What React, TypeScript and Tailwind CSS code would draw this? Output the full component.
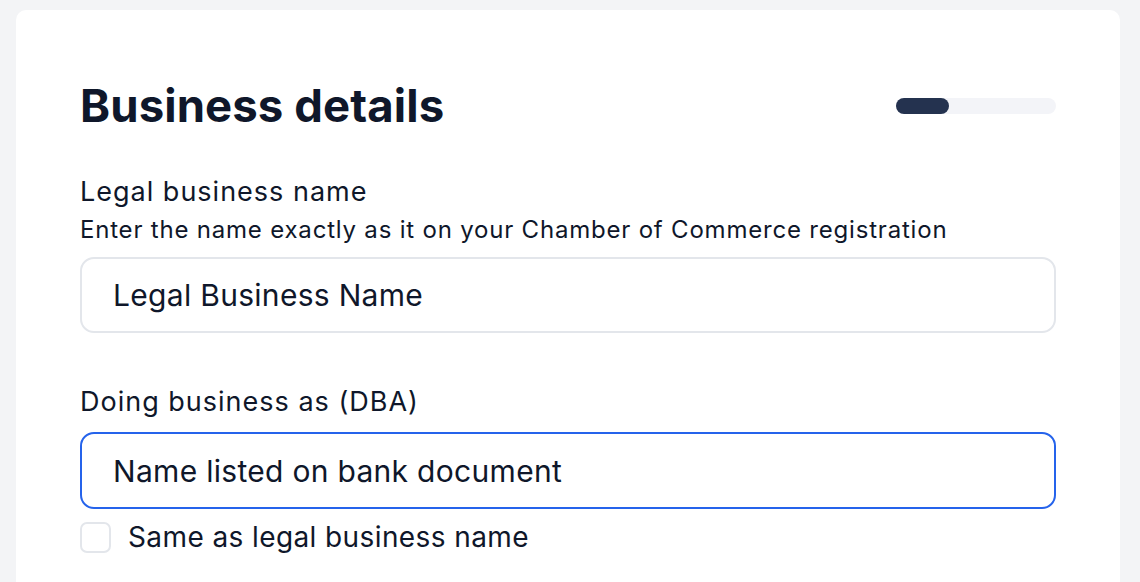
import { useState } from "react";

export default function App() {
  const [same, setSame] = useState(false);

  return (
    <div className="min-h-screen bg-[#f3f4f6] pl-4 pr-5 pt-[10px] font-['Inter',sans-serif] text-[#0f172a]">
      <div className="rounded-[10px] bg-white px-16 pt-[66px] pb-10">
        <div className="flex items-center justify-between">
          <h1 className="text-[45.5px] font-bold leading-[60px] tracking-[0.1px]">Business details</h1>
          <div className="h-4 w-40 rounded-full bg-[#f3f4f8]">
            <div className="h-4 w-[53px] rounded-full bg-[#24324f]" />
          </div>
        </div>

        <div className="mt-[38px]">
          <label className="block text-[27px] leading-[36px] tracking-[1px]">Legal business name</label>
          <p className="mt-1 text-[24px] leading-[32px] tracking-[0.8px]">
            Enter the name exactly as it on your Chamber of Commerce registration
          </p>
          <input
            className="mt-[11px] h-[76px] w-full rounded-[14px] border-2 border-[#e3e6eb] px-[31px] text-[30px] tracking-[0.3px] text-[#0f172a] outline-none"
            defaultValue="Legal Business Name"
          />
        </div>

        <div className="mt-[51px]">
          <label className="block text-[27px] leading-[36px] tracking-[1px]">Doing business as (DBA)</label>
          <input
            className="mt-[12px] h-[77px] w-full rounded-[14px] border-2 border-[#2563eb] px-[31px] text-[30px] tracking-[0.3px] text-[#0f172a] outline-none placeholder:text-[#0f172a]"
            placeholder="Name listed on bank document"
          />
          <label className="mt-[11px] flex items-center gap-[17px]">
            <input
              type="checkbox"
              checked={same}
              onChange={(e) => setSame(e.target.checked)}
              className="h-[31px] w-[31px] appearance-none rounded-[7px] border-2 border-[#e3e6eb] checked:bg-[#2563eb]"
            />
            <span className="text-[28px] leading-[34px] tracking-[0.4px]">Same as legal business name</span>
          </label>
        </div>
      </div>
    </div>
  );
}
